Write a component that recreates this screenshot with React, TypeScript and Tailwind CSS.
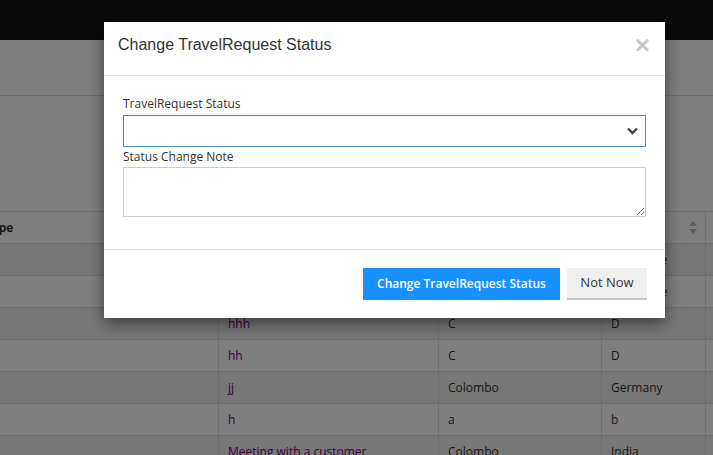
import React from 'react';

const rows = [
  { purpose: '', from: '', to: 'Singapore' },
  { purpose: '', from: '', to: 'Singapore' },
  { purpose: 'hhh', from: 'C', to: 'D' },
  { purpose: 'hh', from: 'C', to: 'D' },
  { purpose: 'jj', from: 'Colombo', to: 'Germany' },
  { purpose: 'h', from: 'a', to: 'b' },
  { purpose: 'Meeting with a customer', from: 'Colombo', to: 'India' },
];

function SortIcon() {
  return (
    <svg width="8" height="13" viewBox="0 0 8 13" fill="#bdbdbd">
      <path d="M4 0 L8 5 L0 5 Z" />
      <path d="M4 13 L8 8 L0 8 Z" />
    </svg>
  );
}

export default function App() {
  return (
    <div className="relative w-[713px] h-[455px] overflow-hidden bg-white font-['Open_Sans',sans-serif] text-[12px] text-[#333]">
      {/* page behind the modal */}
      <div className="h-[40px] bg-[#141414]" />
      <div className="h-[56px] border-b border-[#dddddd]" />
      <div className="h-[115px]" />

      <div className="border-t border-[#dddddd]">
        <div className="flex h-[32px] border-b border-[#dddddd] bg-white">
          <div className="w-[219px] shrink-0 border-r border-[#dddddd] flex items-center overflow-hidden font-bold">
            <span className="-ml-[15px]">Type</span>
          </div>
          <div className="w-[220px] shrink-0 border-r border-[#dddddd] px-[9px] flex items-center font-bold">Purpose</div>
          <div className="w-[163px] shrink-0 border-r border-[#dddddd] px-[9px] flex items-center font-bold">From</div>
          <div className="w-[104px] shrink-0 border-r border-[#dddddd] pl-[9px] pr-[8px] flex items-center justify-between font-bold">
            <span>To</span>
            <SortIcon />
          </div>
          <div className="flex-1" />
        </div>

        {rows.map((r, i) => (
          <div
            key={i}
            className={`flex h-[32px] border-b border-[#dddddd] ${i % 2 === 0 ? 'bg-[#eeeeee]' : 'bg-white'}`}
          >
            <div className="w-[219px] shrink-0 border-r border-[#dddddd]" />
            <div className="w-[220px] shrink-0 border-r border-[#dddddd] px-[9px] flex items-center text-[#800080] whitespace-nowrap">
              {r.purpose}
            </div>
            <div className="w-[163px] shrink-0 border-r border-[#dddddd] px-[9px] flex items-center">{r.from}</div>
            <div className="w-[104px] shrink-0 border-r border-[#dddddd] px-[9px] flex items-center">{r.to}</div>
            <div className="flex-1" />
          </div>
        ))}
      </div>

      {/* backdrop */}
      <div className="absolute inset-0 bg-black/50" />

      {/* modal */}
      <div className="absolute left-[104px] top-[22px] w-[561px] bg-white shadow-[0_5px_15px_rgba(0,0,0,0.5)]">
        <div className="h-[54px] border-b border-[#e5e5e5] pl-[14px] pr-[15px] pt-[12px] flex items-start justify-between">
          <h4 className="font-['Liberation_Sans',Arial,sans-serif] text-[16px] leading-[22px] text-[#333]">
            Change TravelRequest Status
          </h4>
          <button className="font-['Liberation_Sans',Arial,sans-serif] font-bold text-[26px] leading-[20px] text-[#c8c8c8] mt-[1px]">
            ×
          </button>
        </div>

        <div className="px-[19px] pt-[20px] pb-[32px]">
          <label className="block leading-[16px] mb-[3px]">TravelRequest Status</label>
          <div className="relative h-[32px] border border-[#4a8ec2] flex items-center justify-end pr-[7px]">
            <svg width="11" height="8" viewBox="0 0 11 8" fill="none" stroke="#444" strokeWidth="2.4">
              <polyline points="1,1.5 5.5,6 10,1.5" />
            </svg>
          </div>
          <label className="block leading-[16px] mt-[2px] mb-[2px]">Status Change Note</label>
          <textarea className="block w-full h-[50px] border border-[#cccccc] outline-none" />
        </div>

        <div className="border-t border-[#e5e5e5] pt-[18px] pb-[18px] pr-[18px] flex justify-end gap-[7px]">
          <button className="w-[197px] h-[32px] bg-[#1890ff] text-white font-semibold text-[12px]">
            Change TravelRequest Status
          </button>
          <button className="w-[80px] h-[32px] bg-[#efefef] border-b-2 border-[#c4c4c4] text-[#333] text-[13px]">
            Not Now
          </button>
        </div>
      </div>
    </div>
  );
}
